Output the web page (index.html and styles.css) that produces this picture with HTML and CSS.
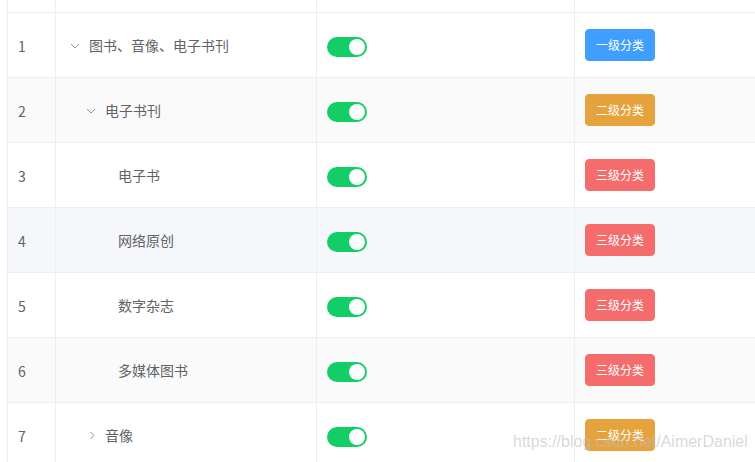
FILE: index.html
```html
<!DOCTYPE html>
<html lang="zh">
<head>
<meta charset="utf-8">
<link rel="stylesheet" href="styles.css">
</head>
<body>
<div class="page">
  <div class="table">
    <div class="row row-top">
      <div class="cell c1"></div><div class="cell c2"></div><div class="cell c3"></div><div class="cell c4"></div>
    </div>
    <div class="row">
      <div class="cell c1">1</div>
      <div class="cell c2"><span class="lvl0"></span><svg class="expand" width="20" height="20" viewBox="0 0 20 20"><path d="M5 9 L9 13 L13 9" /></svg><span class="label">图书、音像、电子书刊</span></div>
      <div class="cell c3"><span class="switch"><span class="knob"></span></span></div>
      <div class="cell c4"><span class="tag tag-blue">一级分类</span></div>
    </div>
    <div class="row striped">
      <div class="cell c1">2</div>
      <div class="cell c2"><span class="indent1"></span><svg class="expand" width="20" height="20" viewBox="0 0 20 20"><path d="M5 9 L9 13 L13 9" /></svg><span class="label">电子书刊</span></div>
      <div class="cell c3"><span class="switch"><span class="knob"></span></span></div>
      <div class="cell c4"><span class="tag tag-orange">二级分类</span></div>
    </div>
    <div class="row">
      <div class="cell c1">3</div>
      <div class="cell c2"><span class="indent2"></span><span class="placeholder"></span><span class="label">电子书</span></div>
      <div class="cell c3"><span class="switch"><span class="knob"></span></span></div>
      <div class="cell c4"><span class="tag tag-red">三级分类</span></div>
    </div>
    <div class="row hover">
      <div class="cell c1">4</div>
      <div class="cell c2"><span class="indent2"></span><span class="placeholder"></span><span class="label">网络原创</span></div>
      <div class="cell c3"><span class="switch"><span class="knob"></span></span></div>
      <div class="cell c4"><span class="tag tag-red">三级分类</span></div>
    </div>
    <div class="row">
      <div class="cell c1">5</div>
      <div class="cell c2"><span class="indent2"></span><span class="placeholder"></span><span class="label">数字杂志</span></div>
      <div class="cell c3"><span class="switch"><span class="knob"></span></span></div>
      <div class="cell c4"><span class="tag tag-red">三级分类</span></div>
    </div>
    <div class="row striped">
      <div class="cell c1">6</div>
      <div class="cell c2"><span class="indent2"></span><span class="placeholder"></span><span class="label">多媒体图书</span></div>
      <div class="cell c3"><span class="switch"><span class="knob"></span></span></div>
      <div class="cell c4"><span class="tag tag-red">三级分类</span></div>
    </div>
    <div class="row">
      <div class="cell c1">7</div>
      <div class="cell c2"><span class="indent1"></span><svg class="expand" width="20" height="20" viewBox="0 0 20 20"><path d="M8.5 7 L12 10.5 L8.5 14" /></svg><span class="label">音像</span></div>
      <div class="cell c3"><span class="switch"><span class="knob"></span></span></div>
      <div class="cell c4"><span class="tag tag-orange">二级分类</span></div>
    </div>
  </div>
  <div class="watermark">https://blog.csdn.net/AimerDaniel</div>
</div>
</body>
</html>
```
FILE: styles.css
```css
* { box-sizing: border-box; }
html, body {
  margin: 0;
  padding: 0;
  background: #fff;
  overflow: hidden;
}
body {
  width: 755px;
  height: 462px;
  font-family: "Noto Sans CJK SC", "Noto Sans", sans-serif;
  font-size: 14px;
  color: #606266;
}
.page {
  position: relative;
  width: 755px;
  height: 462px;
  padding-left: 7px;
}
.table {
  border-left: 1px solid #ebeef5;
  width: 760px;
}
.row {
  display: grid;
  grid-template-columns: 48px 261px 258px 1fr;
  height: 65px;
  background: #fff;
}
.row-top { height: 13px; }
.row.striped { background: #fafafa; }
.row.hover { background: #f5f7fa; }
.cell {
  border-right: 1px solid #ebeef5;
  border-bottom: 1px solid #ebeef5;
  padding: 0 10px;
  display: flex;
  align-items: center;
  line-height: 23px;
  white-space: nowrap;
}
.c1 { padding-top: 2px; }
.indent1 { display: inline-block; width: 16px; flex: none; }
.indent2 { display: inline-block; width: 32px; flex: none; }
.placeholder { display: inline-block; width: 20px; flex: none; }
.expand {
  flex: none;
  margin-right: 3px;
  fill: none;
  stroke: #909399;
  stroke-width: 1;
}
.label { padding-top: 1px; }
.switch {
  position: relative;
  display: inline-block;
  width: 40px;
  height: 20px;
  border-radius: 10px;
  background: #13ce66;
  margin-top: 4px;
}
.knob {
  position: absolute;
  top: 2px;
  left: 22px;
  width: 16px;
  height: 16px;
  border-radius: 50%;
  background: #fff;
}
.tag {
  display: inline-block;
  height: 32px;
  line-height: 30px;
  padding: 0 10px;
  border-radius: 4px;
  font-size: 12px;
  color: #fff;
  border: 1px solid transparent;
}
.tag-blue { background: #409eff; border-color: #409eff; }
.tag-orange { background: #e6a23c; border-color: #e6a23c; }
.tag-red { background: #f56c6c; border-color: #f56c6c; }
.watermark {
  position: absolute;
  left: 513px;
  top: 432px;
  font-family: "Liberation Sans", Arial, sans-serif;
  font-size: 16px;
  line-height: 20px;
  color: rgba(140, 140, 140, 0.35);
  text-shadow: 0 0 1px rgba(255, 255, 255, 0.4);
  white-space: nowrap;
}
```
